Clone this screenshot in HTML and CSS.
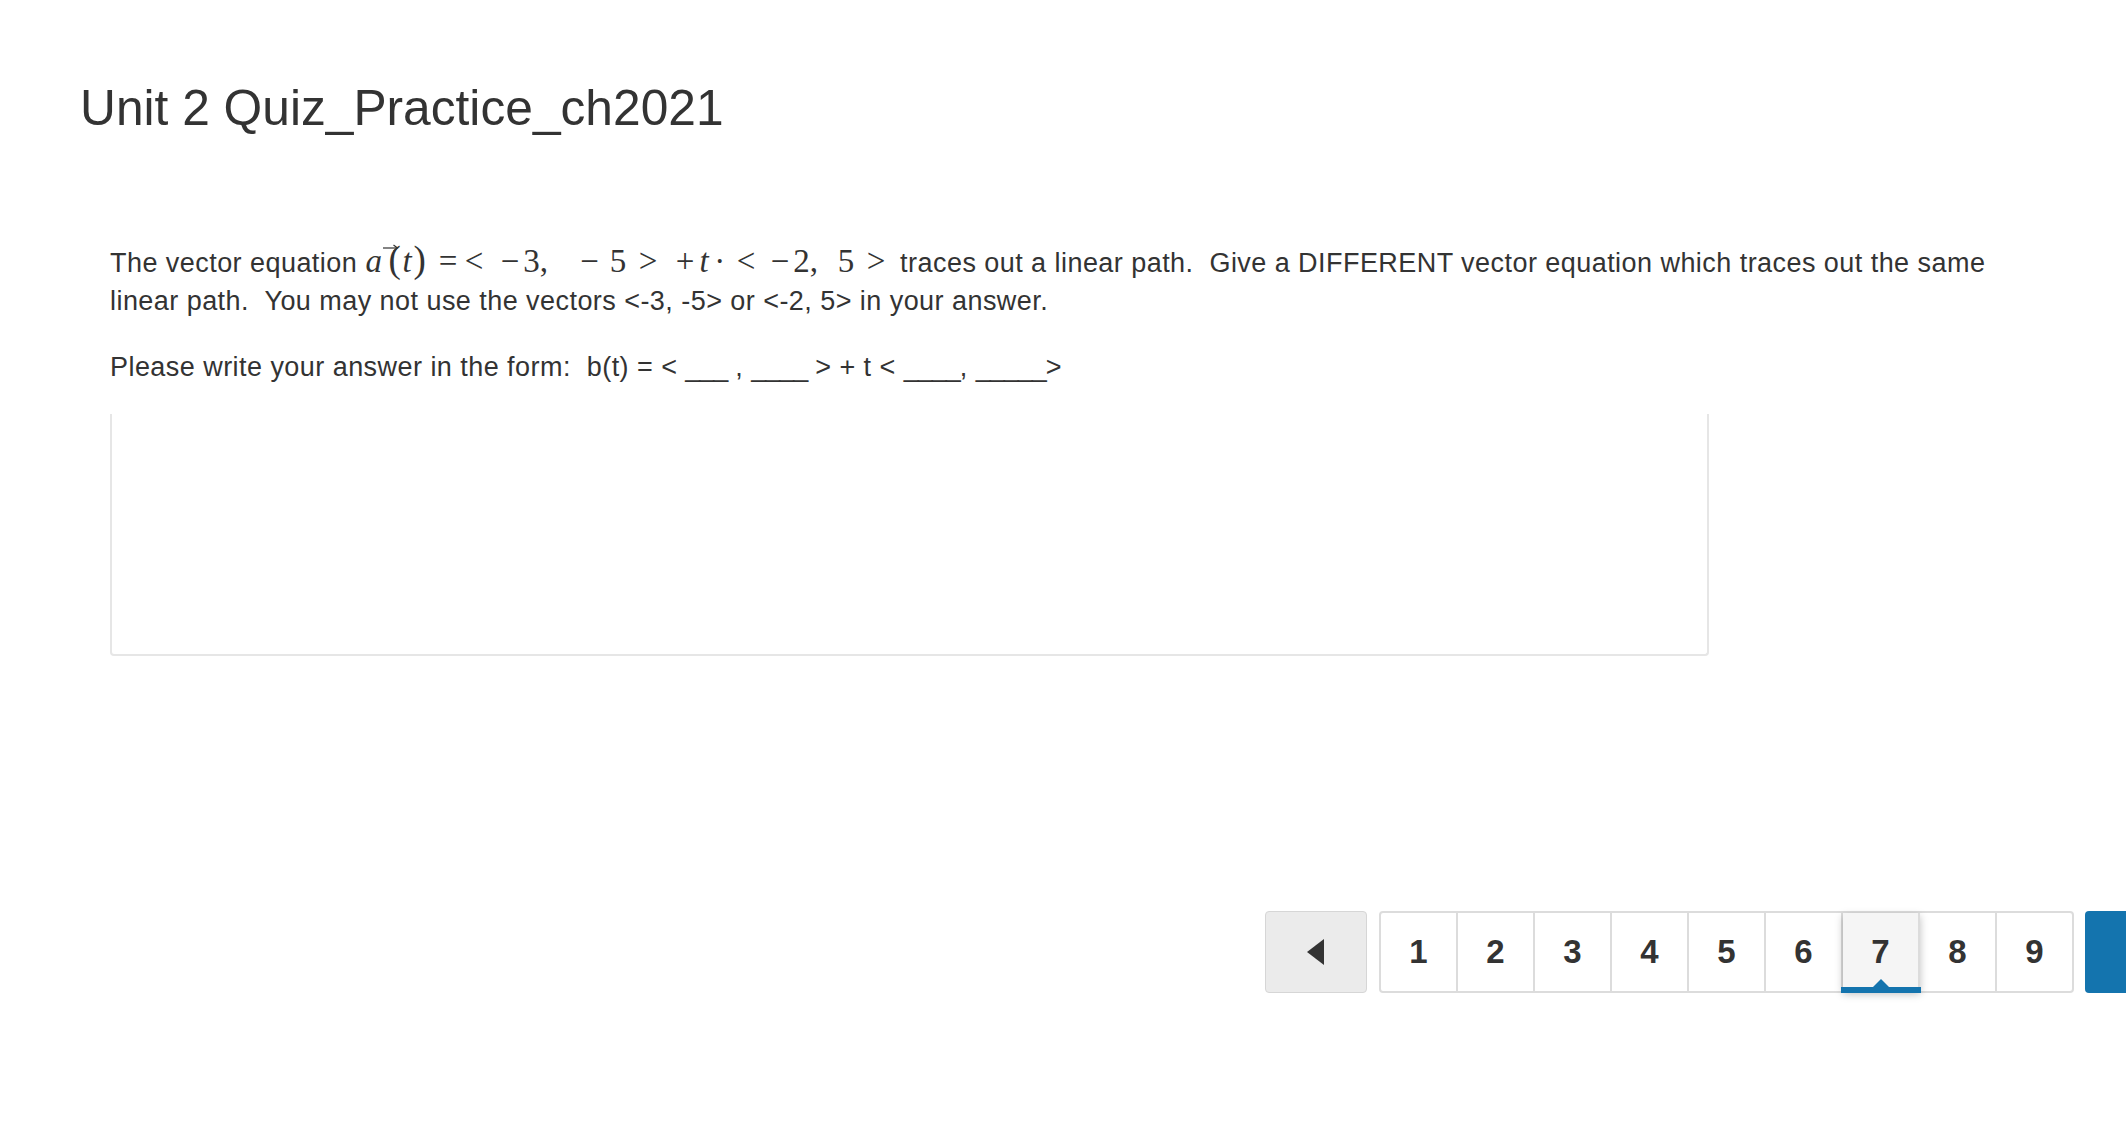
FILE: index.html
```html
<!DOCTYPE html>
<html>
<head>
<meta charset="utf-8">
<link rel="stylesheet" href="styles.css">
</head>
<body>
<div class="page">
  <h1 class="title">Unit 2 Quiz_Practice_ch2021</h1>
  <div class="question">
    <p class="prompt">The vector equation <span class="math"><span class="vec">a<svg class="arrow" width="16" height="8" viewBox="0 0 16 8"><path d="M0 4H14" fill="none" stroke="#333" stroke-width="1.2"/><path d="M10.5 1L14.5 4L10.5 7" fill="none" stroke="#333" stroke-width="1.2"/></svg></span><span class="paren" style="margin-left:6px">(</span><span class="it">t</span><span class="paren">)</span><span class="op" style="margin-left:9px">=</span><span class="op">&lt;</span><span class="op" style="margin-left:10px">−</span><span class="d">3</span><span class="c">,</span><span class="op" style="margin-left:28px">−</span><span class="d" style="margin-left:7px">5</span><span class="op" style="margin-left:9px">&gt;</span><span class="op" style="margin-left:11px">+</span><span class="it">t</span><span class="dot" style="margin-left:4px">·</span><span class="op" style="margin-left:10px">&lt;</span><span class="op" style="margin-left:8px">−</span><span class="d">2</span><span class="c">,</span><span class="d" style="margin-left:19px">5</span><span class="op" style="margin-left:9px">&gt;</span></span> traces out a linear path.&nbsp; Give a DIFFERENT vector equation which traces out the same linear path.&nbsp; You may not use the vectors &lt;-3, -5&gt; or &lt;-2, 5&gt; in your answer.</p>
    <p class="form">Please write your answer in the form:&nbsp; b(t) = &lt; <span class="blank">___</span> , <span class="blank">____</span> &gt; + t &lt; <span class="blank">____</span>, <span class="blank">_____</span>&gt;</p>
    <div class="answer"></div>
  </div>
  <nav class="pager">
    <button class="prev"><svg width="18" height="26" viewBox="0 0 18 26"><path d="M17 0V26L0 13Z" fill="#333"/></svg></button>
    <div class="pages">
      <span class="pg">1</span>
      <span class="pg">2</span>
      <span class="pg">3</span>
      <span class="pg">4</span>
      <span class="pg">5</span>
      <span class="pg">6</span>
      <span class="pg active">7</span>
      <span class="pg">8</span>
      <span class="pg">9</span>
    </div>
    <button class="next"></button>
  </nav>
</div>
</body>
</html>
```
FILE: styles.css
```css
html, body {
  margin: 0;
  padding: 0;
  background: #fff;
  overflow: hidden;
}
body {
  font-family: "Liberation Sans", Arial, sans-serif;
  color: #333;
}
.page {
  width: 2126px;
  height: 1136px;
}
.title {
  margin: 81px 0 0 80px;
  font-size: 49.7px;
  line-height: 55px;
  font-weight: normal;
  color: #333;
}
.question {
  margin: 108px 0 0 110px;
  width: 1930px;
  font-size: 27px;
  letter-spacing: 0.45px;
  line-height: 38px;
}
.prompt {
  margin: 0 0 28px;
}
.form {
  margin: 0 0 28px;
}
.blank {
  letter-spacing: -1px;
}
.math {
  font-family: "Liberation Serif", "Times New Roman", serif;
  font-size: 33px;
  letter-spacing: 0;
  line-height: 0;
  white-space: nowrap;
  margin-right: 3px;
}
.math > span {
  display: inline-block;
  text-align: center;
}
.vec {
  position: relative;
  font-style: italic;
  width: 17px;
}
.arrow {
  position: absolute;
  left: 18px;
  top: -17px;
}
.paren {
  font-size: 37px;
  width: 13px;
}
.it {
  font-style: italic;
  width: 12px;
}
.op {
  width: 26px;
}
.d {
  width: 16.5px;
}
.c {
  width: 9px;
  text-align: left !important;
}
.dot {
  width: 9px;
}
.answer {
  width: 1595px;
  height: 240px;
  border: 2px solid #e6e6e6;
  border-top: none;
  border-radius: 0 0 4px 4px;
}
.pager {
  margin-top: 255px;
  display: flex;
  justify-content: flex-end;
  margin-right: -61px;
  height: 82px;
}
.prev {
  width: 102px;
  height: 82px;
  background: #ebebeb;
  border: 1px solid #d6d6d6;
  border-radius: 4px;
  display: flex;
  align-items: center;
  justify-content: center;
  padding: 0;
}
.pages {
  margin-left: 12px;
  display: flex;
  border: 2px solid #dcdcdc;
  border-radius: 4px;
  height: 78px;
}
.pg {
  width: 75px;
  border-right: 2px solid #dcdcdc;
  display: flex;
  align-items: center;
  justify-content: center;
  font-weight: bold;
  font-size: 33px;
  color: #333;
  position: relative;
}
.pg:last-child {
  border-right: none;
}
.pg.active {
  background: #f5f5f5;
  box-shadow: 0 3px 8px rgba(0, 0, 0, 0.25);
}
.pg.active::after {
  content: "";
  position: absolute;
  left: -2px;
  right: -3px;
  bottom: -2px;
  height: 6px;
  background: #1474ae;
}
.pg.active::before {
  content: "";
  position: absolute;
  left: 50%;
  margin-left: -8px;
  bottom: 4px;
  border-left: 8px solid transparent;
  border-right: 8px solid transparent;
  border-bottom: 8px solid #1474ae;
}
.next {
  margin-left: 11px;
  width: 102px;
  height: 82px;
  background: #1474ae;
  border: none;
  border-radius: 4px;
  padding: 0;
}
```
